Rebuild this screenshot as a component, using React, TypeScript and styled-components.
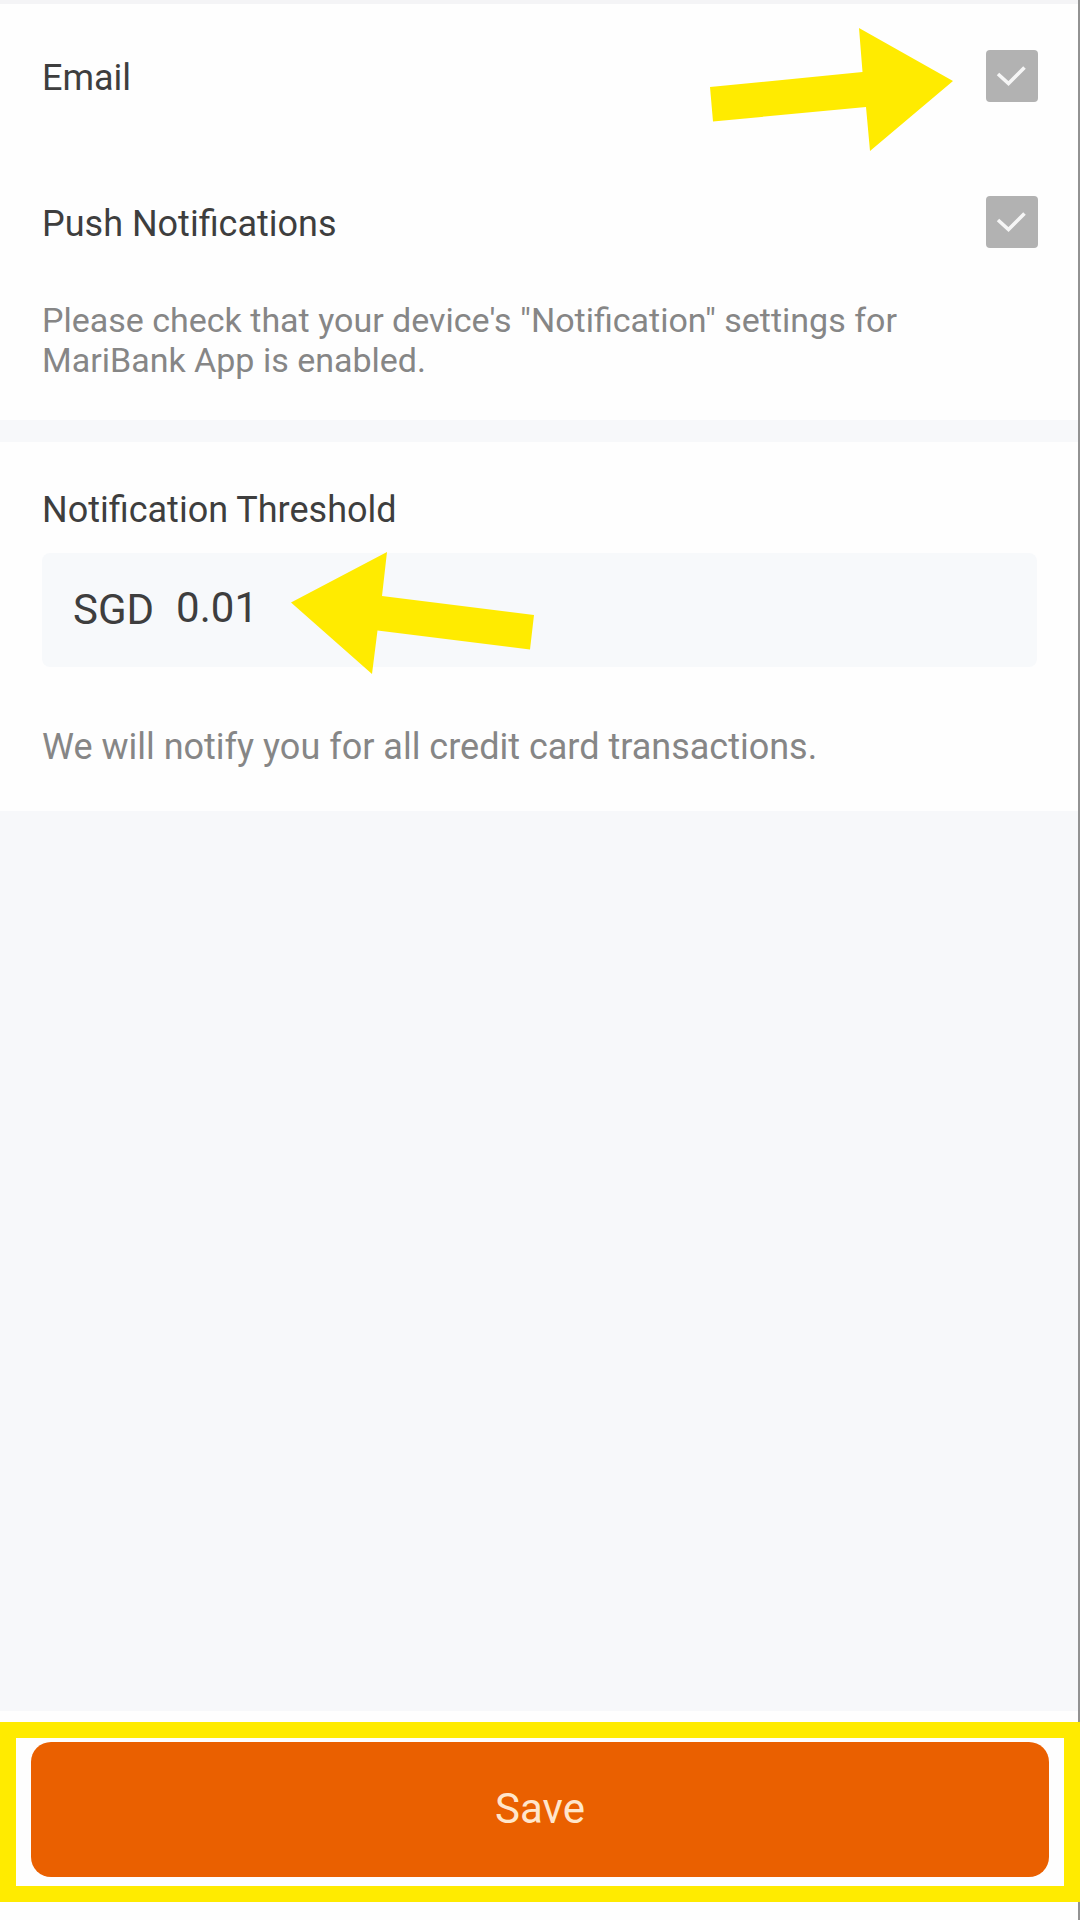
import React, { useState } from "react";
import styled, { createGlobalStyle } from "styled-components";

const GlobalStyle = createGlobalStyle`
  *, *::before, *::after { box-sizing: border-box; }
  body { margin: 0; background: #fefefe; }
  body, input, button { font-family: Roboto, "Liberation Sans", sans-serif; }
`;

const Page = styled.div`
  display: flex;
  flex-direction: column;
  min-height: 100vh;
  background: #f7f8fa;
  border-right: 2px solid #929292;
`;

const Form = styled.form`
  display: flex;
  flex: 1;
  flex-direction: column;
`;

const Section = styled.section<{ $pad: string }>`
  padding: ${(p) => p.$pad};
  background: #fefefe;
`;

const Channels = styled(Section)`
  border-top: 4px solid #f4f4f6;
`;

const Divider = styled.div`
  height: 22px;
`;

const Row = styled.div`
  position: relative;
  display: flex;
  align-items: center;
  justify-content: space-between;
  height: 52px;
  & + & { margin-top: 94px; }
`;

const Label = styled.label`
  display: block;
  padding-top: 4px;
  color: #3e3e3e;
  font-size: 36px;
  line-height: 44px;
`;

const Note = styled.p<{ $size: number; $gap: number }>`
  margin: ${(p) => p.$gap}px 0 0;
  color: #868686;
  font-size: ${(p) => p.$size}px;
  line-height: 40px;
`;

const CheckHolder = styled.span`
  position: relative;
  display: block;
  width: 52px;
  height: 52px;
`;

const CheckInput = styled.input`
  appearance: none;
  display: block;
  width: 52px;
  height: 52px;
  margin: 0;
  border-radius: 4px;
  background: #b2b2b2;
  & + svg { visibility: hidden; }
  &:checked + svg { visibility: visible; }
`;

const CheckMark = styled.svg`
  position: absolute;
  inset: 0;
  pointer-events: none;
`;

const Field = styled.div`
  position: relative;
  display: flex;
  align-items: center;
  gap: 22px;
  height: 114px;
  margin-top: 21px;
  padding: 0 31px;
  border-radius: 8px;
  background: #f7f9fb;
  color: #3e3e3e;
  font-size: 42px;
`;

const Currency = styled.span`
  line-height: 48px;
`;

const Amount = styled.input`
  flex: 1;
  min-width: 0;
  height: 48px;
  margin-bottom: 6px;
  padding: 0;
  border: 0;
  outline: 0;
  background: transparent;
  color: inherit;
  font-size: 42px;
`;

const Arrow = styled.svg`
  position: absolute;
  fill: #ffeb00;
  pointer-events: none;
`;

const RightArrow = styled(Arrow)`
  top: -22px;
  right: 84px;
`;

const LeftArrow = styled(Arrow)`
  top: -2px;
  left: 249px;
`;

const Footer = styled.footer`
  position: relative;
  margin-top: auto;
  padding: 31px 29px 43px 31px;
  background: #fefefe;
`;

const SaveButton = styled.button`
  display: block;
  width: 100%;
  height: 135px;
  padding: 0 0 2px;
  border: 0;
  border-radius: 20px;
  background: #ea6000;
  color: #ffe6cc;
  font-size: 42px;
  line-height: 48px;
`;

const Highlight = styled.div`
  position: absolute;
  inset: 11px -2px 18px 0;
  border: 16px solid #ffeb00;
  pointer-events: none;
`;

function Check({ id }: { id: string }) {
  const [on, setOn] = useState(true);
  return (
    <CheckHolder>
      <CheckInput id={id} type="checkbox" checked={on} onChange={() => setOn(!on)} />
      <CheckMark width="52" height="52" viewBox="0 0 52 52" aria-hidden="true">
        <path d="M12 24 L22.5 33.5 L38.5 17.5" fill="none" stroke="#f6f6f6" strokeWidth="3.6" />
      </CheckMark>
    </CheckHolder>
  );
}

export default function App() {
  const [amount, setAmount] = useState("0.01");
  return (
    <>
      <GlobalStyle />
      <Page>
        <Form onSubmit={(e) => e.preventDefault()}>
          <Channels $pad="46px 40px 40px 42px">
            <Row>
              <Label htmlFor="email">Email</Label>
              <Check id="email" />
              <RightArrow width="244" height="124" viewBox="0 0 244 124" aria-hidden="true">
                <path d="M0 59 L152.500 44 L149 0 L243 53 L160 123 L156 79 L3 93.500 Z" />
              </RightArrow>
            </Row>
            <Row>
              <Label htmlFor="push">Push Notifications</Label>
              <Check id="push" />
            </Row>
            <Note $size={34} $gap={52}>
              Please check that your device's "Notification" settings for MariBank App is enabled.
            </Note>
          </Channels>
          <Divider />
          <Section $pad="42px 41px 44px 42px">
            <Label htmlFor="threshold">Notification Threshold</Label>
            <Field>
              <Currency>SGD</Currency>
              <Amount
                id="threshold"
                inputMode="decimal"
                value={amount}
                onChange={(e) => setAmount(e.target.value)}
              />
              <LeftArrow width="244" height="124" viewBox="0 0 244 124" aria-hidden="true">
                <path d="M0 51.500 L96 1 L91 45 L243 64 L239 98.500 L86.500 79.500 L81 123 Z" />
              </LeftArrow>
            </Field>
            <Note $size={36} $gap={60}>
              We will notify you for all credit card transactions.
            </Note>
          </Section>
          <Footer>
            <SaveButton type="submit">Save</SaveButton>
            <Highlight />
          </Footer>
        </Form>
      </Page>
    </>
  );
}
